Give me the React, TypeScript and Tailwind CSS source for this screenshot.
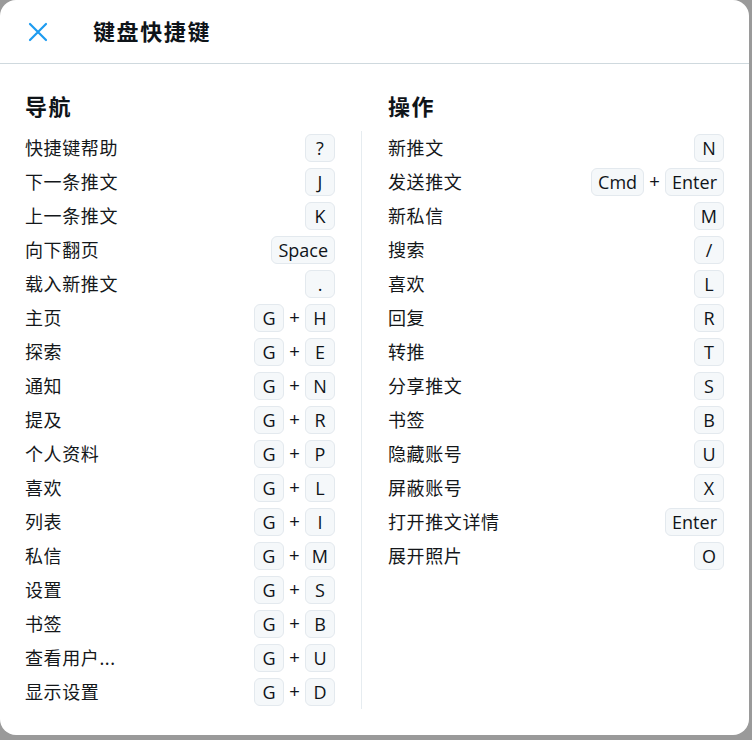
import React from 'react';

type Shortcut = { label: string; keys: string[] };

const navigation: Shortcut[] = [
  { label: '快捷键帮助', keys: ['?'] },
  { label: '下一条推文', keys: ['J'] },
  { label: '上一条推文', keys: ['K'] },
  { label: '向下翻页', keys: ['Space'] },
  { label: '载入新推文', keys: ['.'] },
  { label: '主页', keys: ['G', 'H'] },
  { label: '探索', keys: ['G', 'E'] },
  { label: '通知', keys: ['G', 'N'] },
  { label: '提及', keys: ['G', 'R'] },
  { label: '个人资料', keys: ['G', 'P'] },
  { label: '喜欢', keys: ['G', 'L'] },
  { label: '列表', keys: ['G', 'I'] },
  { label: '私信', keys: ['G', 'M'] },
  { label: '设置', keys: ['G', 'S'] },
  { label: '书签', keys: ['G', 'B'] },
  { label: '查看用户...', keys: ['G', 'U'] },
  { label: '显示设置', keys: ['G', 'D'] },
];

const actions: Shortcut[] = [
  { label: '新推文', keys: ['N'] },
  { label: '发送推文', keys: ['Cmd', 'Enter'] },
  { label: '新私信', keys: ['M'] },
  { label: '搜索', keys: ['/'] },
  { label: '喜欢', keys: ['L'] },
  { label: '回复', keys: ['R'] },
  { label: '转推', keys: ['T'] },
  { label: '分享推文', keys: ['S'] },
  { label: '书签', keys: ['B'] },
  { label: '隐藏账号', keys: ['U'] },
  { label: '屏蔽账号', keys: ['X'] },
  { label: '打开推文详情', keys: ['Enter'] },
  { label: '展开照片', keys: ['O'] },
];

const Key: React.FC<{ k: string }> = ({ k }) => (
  <span className="h-[28px] min-w-[30px] px-[6px] flex items-center justify-center rounded-[6px] bg-[#f5f8fa] border border-[#e3e9ee] text-[18px] leading-none text-[#0f1419] font-['Open_Sans',sans-serif]">
    {k}
  </span>
);

const Row: React.FC<{ item: Shortcut }> = ({ item }) => (
  <div className="h-[34px] flex items-center justify-between">
    <span className="text-[18px] tracking-[0.6px] text-[#14171a]">{item.label}</span>
    <div className="flex items-center">
      {item.keys.map((k, i) => (
        <React.Fragment key={k + i}>
          {i > 0 && <span className="w-[21px] text-center text-[18px] leading-none text-[#0f1419] font-['Liberation_Sans',sans-serif]">+</span>}
          <Key k={k} />
        </React.Fragment>
      ))}
    </div>
  </div>
);

export default function App() {
  return (
    <div className="w-[752px] h-[740px] bg-[#9a9a9a] overflow-hidden font-['Noto_Sans','Noto_Sans_CJK_SC',sans-serif]">
      <div className="w-[749px] h-[735px] bg-white rounded-[16px] flex flex-col">
        <header className="h-[64px] flex items-center border-b border-[#cfd9de] shrink-0">
          <button className="ml-[18px] w-[40px] h-[40px] flex items-center justify-center text-[#1d9bf0]">
            <svg width="20" height="20" viewBox="0 0 20 20" fill="none" stroke="currentColor" strokeWidth="2.2" strokeLinecap="round">
              <path d="M2 2 L18 18 M18 2 L2 18" />
            </svg>
          </button>
          <h1 className="ml-[35px] text-[22px] font-bold text-[#0f1419] tracking-[1.6px]">键盘快捷键</h1>
        </header>

        <div className="grid grid-cols-[362px_1fr] pt-[28px]">
          <section>
            <h2 className="pl-[25px] h-[28px] leading-[28px] text-[22px] font-bold text-[#0f1419] tracking-[1.5px]">导航</h2>
            <div className="mt-[11px] pl-[25px] pr-[26px] border-r border-[#e6ecf0]">
              {navigation.map((item) => (
                <Row key={item.label} item={item} />
              ))}
            </div>
          </section>
          <section>
            <h2 className="pl-[26px] h-[28px] leading-[28px] text-[22px] font-bold text-[#0f1419] tracking-[1.5px]">操作</h2>
            <div className="mt-[11px] pl-[26px] pr-[25px]">
              {actions.map((item) => (
                <Row key={item.label} item={item} />
              ))}
            </div>
          </section>
        </div>
      </div>
    </div>
  );
}
